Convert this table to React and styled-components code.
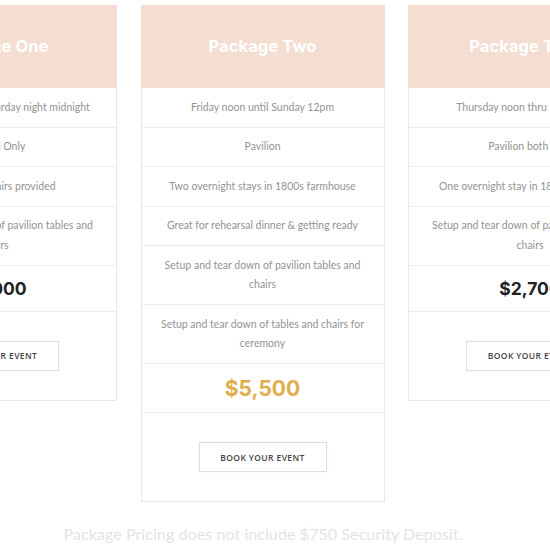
import styled, { createGlobalStyle } from "styled-components";

const GlobalStyle = createGlobalStyle`
  html, body {
    margin: 0;
    padding: 0;
    background: #ffffff;
  }
  body {
    width: 550px;
    height: 550px;
    overflow: hidden;
    font-family: "Lato", "Open Sans", sans-serif;
  }
`;

const packages = [
  {
    name: "Package One",
    features: [
      "Friday noon until Saturday night midnight",
      "Pavilion Only",
      "Tables and chairs provided",
      "Setup and tear down of pavilion tables and chairs",
    ],
    price: "$2,000",
  },
  {
    name: "Package Two",
    featured: true,
    features: [
      "Friday noon until Sunday 12pm",
      "Pavilion",
      "Two overnight stays in 1800s farmhouse",
      "Great for rehearsal dinner & getting ready",
      "Setup and tear down of pavilion tables and chairs",
      "Setup and tear down of tables and chairs for ceremony",
    ],
    price: "$5,500",
  },
  {
    name: "Package Three",
    features: [
      "Thursday noon thru Friday noon",
      "Pavilion both days",
      "One overnight stay in 1800s farmhouse",
      "Setup and tear down of pavilion tables and chairs",
    ],
    price: "$2,700",
  },
];

const Page = styled.div`
  display: flex;
  flex-direction: column;
  padding-top: 5px;
`;

const CardRow = styled.div`
  display: flex;
  justify-content: center;
  align-items: flex-start;
  gap: 23.5px;
  width: 525px;
`;

const Card = styled.div`
  flex: 0 0 244px;
  box-sizing: border-box;
  border: 1px solid #e8e8e8;
  border-top: none;
  background: #fff;
`;

const Header = styled.div`
  height: 83px;
  padding-bottom: 2px;
  box-sizing: border-box;
  margin: 0 -1px;
  background: #f4ddd1;
  display: flex;
  align-items: center;
  justify-content: center;
  color: #ffffff;
  font-family: "Inter", "Open Sans", sans-serif;
  font-weight: 700;
  font-size: 16.5px;
  letter-spacing: 0.1px;
`;

const Feature = styled.div`
  padding: 9.5px 16px 9.5px;
  border-bottom: 1px solid #ececec;
  text-align: center;
  font-size: 10.5px;
  line-height: 19.5px;
  color: #939393;
`;

const Price = styled.div`
  height: ${(p) => (p.$featured ? 48 : 45)}px;
  border-bottom: 1px solid #ececec;
  display: flex;
  align-items: center;
  justify-content: center;
  font-family: "Inter", "Open Sans", sans-serif;
  font-weight: 700;
  font-size: ${(p) => (p.$featured ? 21 : 17.5)}px;
  color: ${(p) => (p.$featured ? "#e1ae4c" : "#222222")};
`;

const ButtonArea = styled.div`
  height: 88px;
  display: flex;
  align-items: center;
  justify-content: center;
`;

const BookButton = styled.button`
  width: 128px;
  height: 30px;
  box-sizing: border-box;
  background: #fff;
  border: 1px solid #dedede;
  box-shadow: 0 0 2px rgba(0, 0, 0, 0.06);
  font-family: "Open Sans", sans-serif;
  font-weight: 600;
  font-size: 8.5px;
  letter-spacing: 0.4px;
  color: #444;
  cursor: pointer;
`;

const Note = styled.p`
  margin: 22px 0 0;
  width: 526px;
  text-align: center;
  font-family: "Lato", sans-serif;
  font-size: 16.2px;
  color: #e4e4e4;
`;

export default function App() {
  return (
    <>
      <GlobalStyle />
      <Page>
        <CardRow>
          {packages.map((pkg) => (
            <Card key={pkg.name}>
              <Header>{pkg.name}</Header>
              {pkg.features.map((f) => (
                <Feature key={f}>{f}</Feature>
              ))}
              <Price $featured={pkg.featured}>{pkg.price}</Price>
              <ButtonArea>
                <BookButton>BOOK YOUR EVENT</BookButton>
              </ButtonArea>
            </Card>
          ))}
        </CardRow>
        <Note>Package Pricing does not include $750 Security Deposit.</Note>
      </Page>
    </>
  );
}
